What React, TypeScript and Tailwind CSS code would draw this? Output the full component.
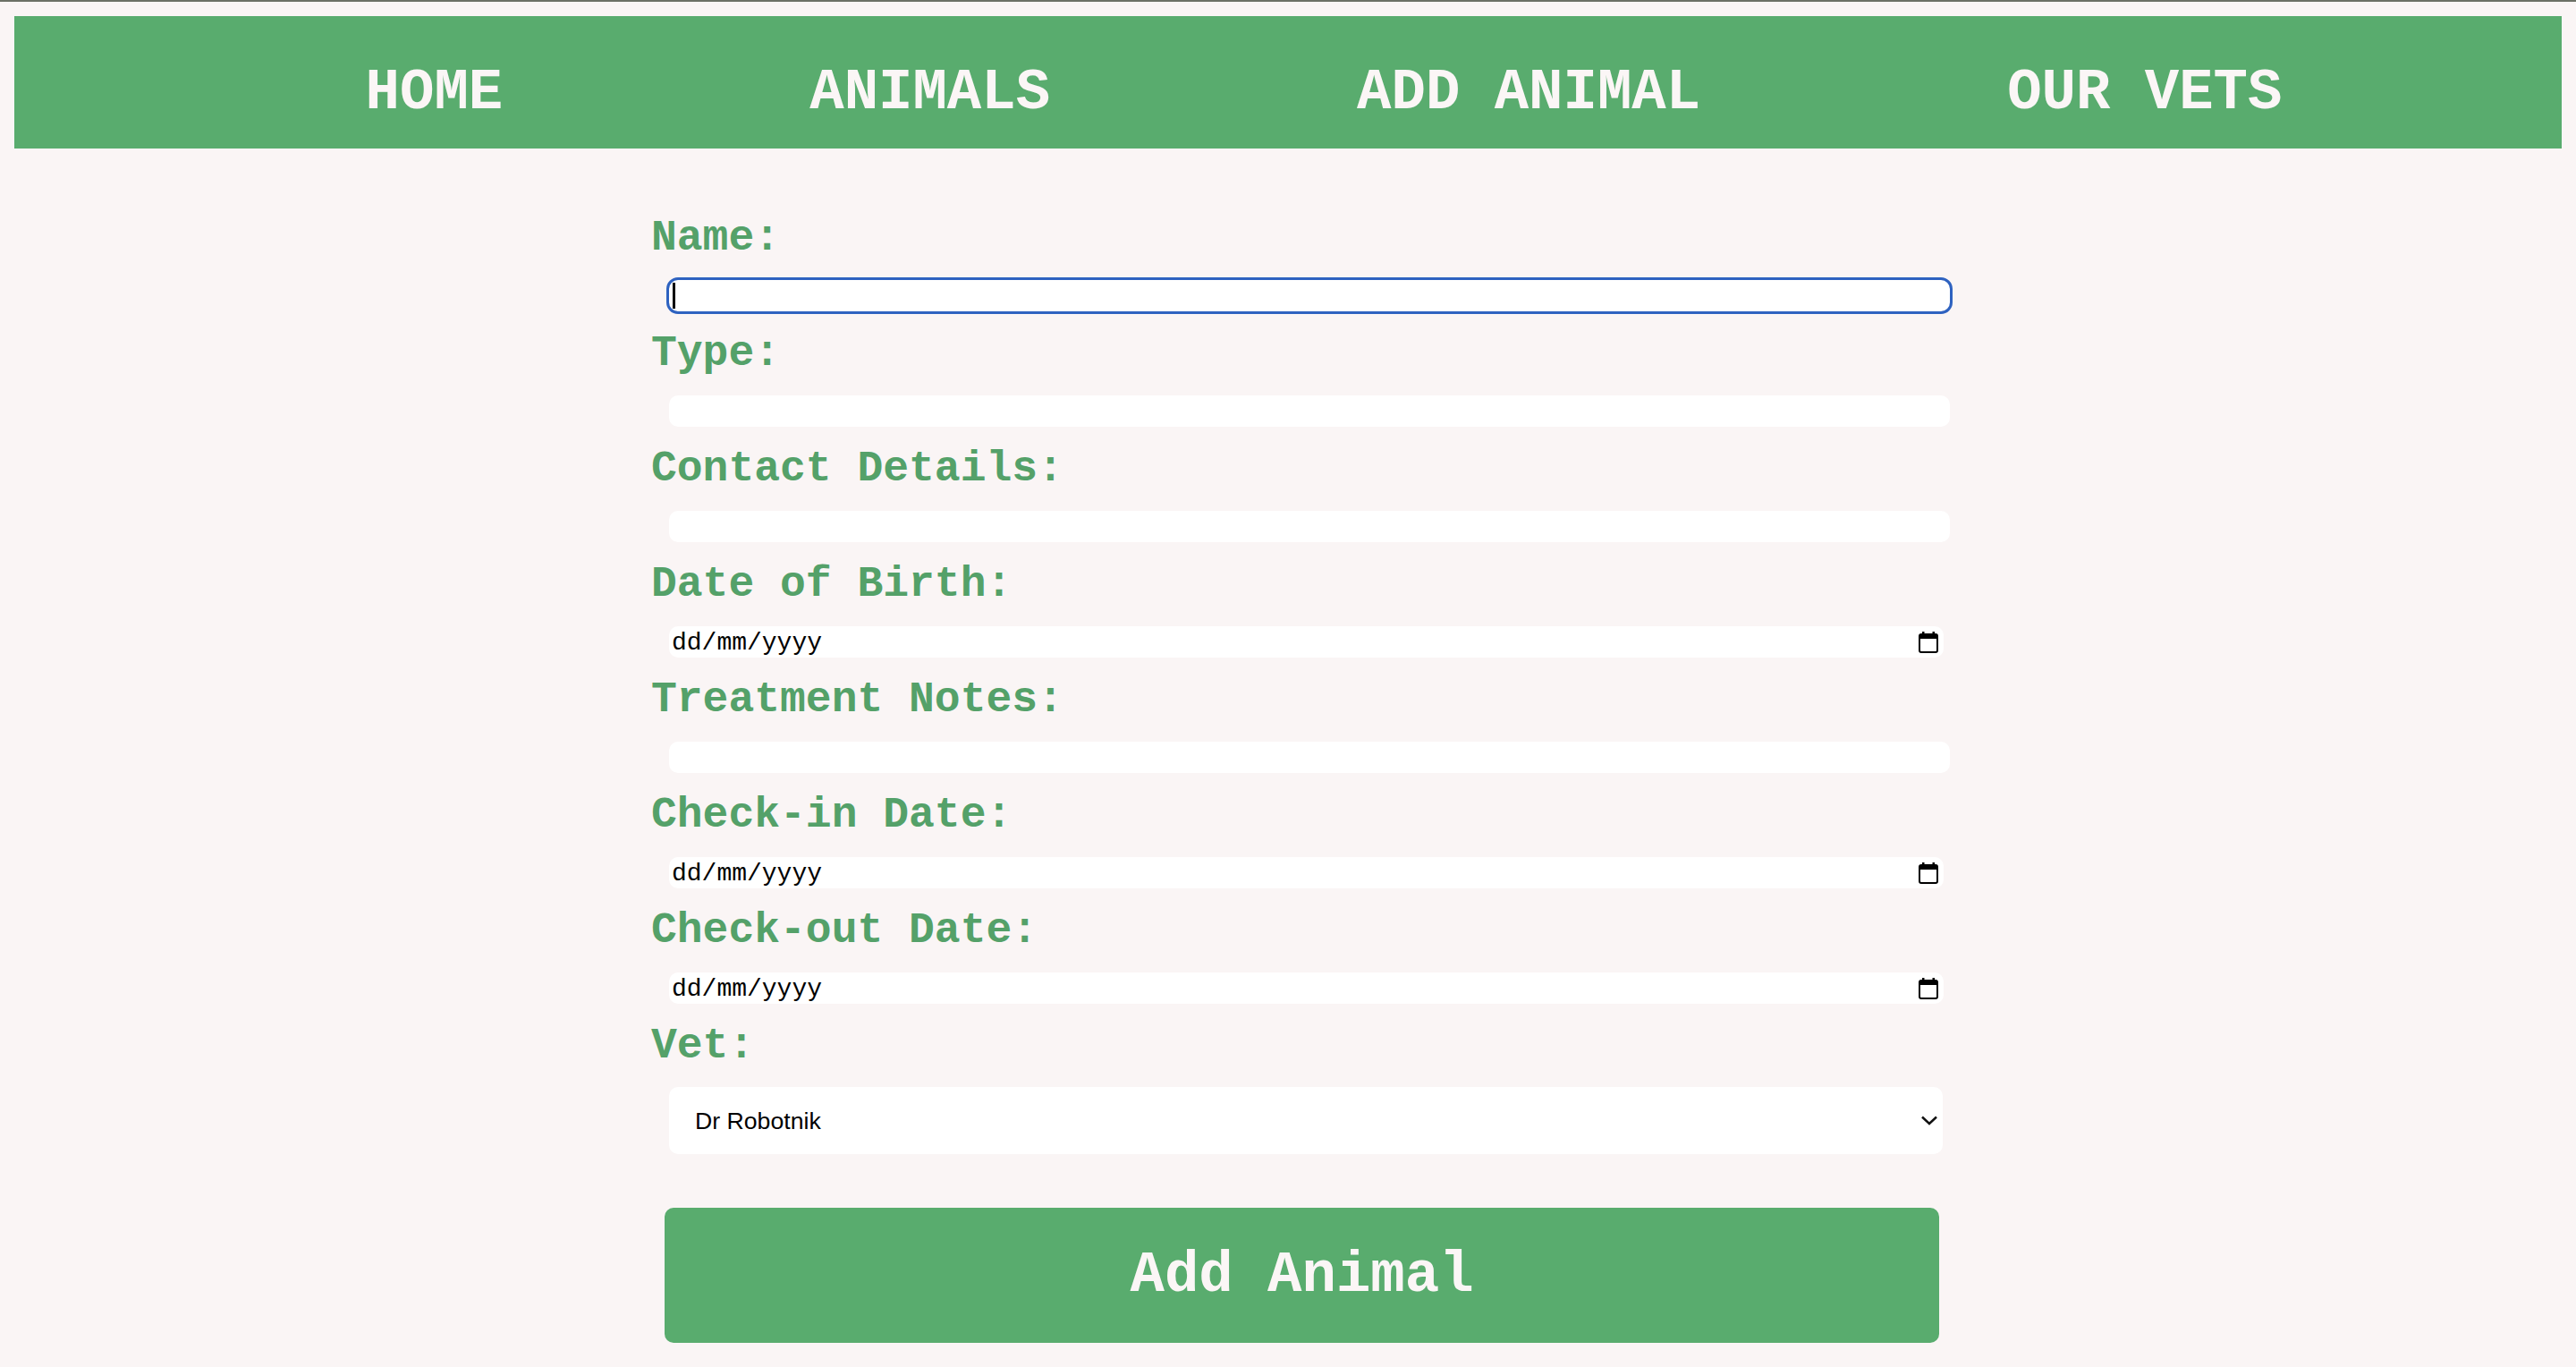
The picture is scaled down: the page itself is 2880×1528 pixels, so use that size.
import React from 'react'

const navLinks = ['HOME', 'ANIMALS', 'ADD ANIMAL', 'OUR VETS']

const labelClass =
  "block text-[48px] leading-[55px] font-bold text-[#54a169] font-['Liberation_Mono','Courier_New',monospace]"

const CalendarIcon = () => (
  <svg width="22" height="24" viewBox="0 0 22 24">
    <rect x="1" y="3" width="20" height="20" rx="2" fill="none" stroke="#000" strokeWidth="2" />
    <rect x="1" y="3" width="20" height="5" fill="#000" />
    <rect x="4" y="0" width="2.5" height="4" fill="#000" />
    <rect x="15.5" y="0" width="2.5" height="4" fill="#000" />
  </svg>
)

const DateField = ({ id }: { id: string }) => (
  <div
    id={id}
    className="ml-[20px] mt-[19px] mb-[20px] w-[1425px] h-[35px] rounded-[10px] bg-white flex items-center justify-between pl-[3px] pr-[6px]"
  >
    <span className="pt-[3px] text-[28px] leading-none text-black font-['Liberation_Mono','Courier_New',monospace]">
      dd/mm/yyyy
    </span>
    <CalendarIcon />
  </div>
)

const TextField = ({ id, focused }: { id: string; focused?: boolean }) => (
  <div className="relative ml-[20px] mt-[19px] mb-[20px] w-[1432px] h-[35px]">
    <input
      id={id}
      type="text"
      className={
        focused
          ? 'w-full h-full rounded-[10px] bg-white outline-[3px] outline-solid outline-[#2e62c0]'
          : 'w-full h-full rounded-[10px] bg-white outline-none'
      }
    />
    {focused && <span className="absolute left-[4px] top-[3px] h-[29px] w-[3px] bg-black" />}
  </div>
)

export default function App() {
  return (
    <div className="min-h-screen bg-[#faf5f5]">
      <div className="h-[2px] bg-[#6b7065]" />

      {/* nav */}
      <nav className="mx-[16px] mt-[16px] h-[148px] bg-[#59ac6e] flex items-center justify-center gap-[343px] pl-[80px] pt-[24px]">
        {navLinks.map((link) => (
          <a
            key={link}
            href="#"
            className="text-[64px] leading-none font-bold text-[#fbf6f6] whitespace-pre font-['Liberation_Mono','Courier_New',monospace]"
          >
            {link}
          </a>
        ))}
      </nav>

      {/* add animal form */}
      <form className="w-[1424px] mx-auto mt-[73px] flex flex-col items-start">
        <label htmlFor="name" className={labelClass}>Name:</label>
        <TextField id="name" focused />

        <label htmlFor="type" className={labelClass}>Type:</label>
        <TextField id="type" />

        <label htmlFor="contact" className={labelClass}>Contact Details:</label>
        <TextField id="contact" />

        <label htmlFor="dob" className={labelClass}>Date of Birth:</label>
        <DateField id="dob" />

        <label htmlFor="notes" className={labelClass}>Treatment Notes:</label>
        <TextField id="notes" />

        <label htmlFor="checkin" className={labelClass}>Check-in Date:</label>
        <DateField id="checkin" />

        <label htmlFor="checkout" className={labelClass}>Check-out Date:</label>
        <DateField id="checkout" />

        <label htmlFor="vet" className={labelClass}>Vet:</label>
        <div className="relative ml-[20px] mt-[18px] w-[1424px] h-[75px]">
          <select
            id="vet"
            className="w-full h-full appearance-none rounded-[10px] bg-white pl-[29px] text-[26.67px] text-black outline-none font-['Liberation_Sans',Arial,sans-serif]"
          >
            <option>Dr Robotnik</option>
          </select>
          <svg
            className="absolute right-[6px] top-[32px] pointer-events-none"
            width="18"
            height="11"
            viewBox="0 0 18 11"
          >
            <path d="M1 1.5 L9 9 L17 1.5" fill="none" stroke="#111" strokeWidth="2.5" />
          </svg>
        </div>

        <button
          type="submit"
          className="ml-[15px] mt-[60px] w-[1425px] h-[151px] rounded-[10px] bg-[#59ac6e] text-[64px] font-bold text-[#fbf6f6] font-['Liberation_Mono','Courier_New',monospace]"
        >
          Add Animal
        </button>
      </form>
    </div>
  )
}
